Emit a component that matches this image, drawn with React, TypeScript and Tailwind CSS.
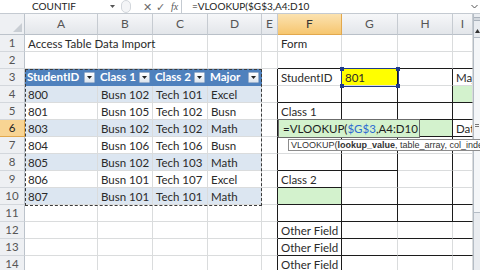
import React from 'react';

type Col = { k: string; w: string };

const cols: Col[] = [
  { k: 'A', w: 'w-[73px]' },
  { k: 'B', w: 'w-[55px]' },
  { k: 'C', w: 'w-[55px]' },
  { k: 'D', w: 'w-[54px]' },
  { k: 'E', w: 'w-[16px]' },
  { k: 'F', w: 'w-[64px]' },
  { k: 'G', w: 'w-[56px]' },
  { k: 'H', w: 'w-[55px]' },
  { k: 'I', w: 'w-[20px]' },
];

const tableHeader = ['StudentID', 'Class 1', 'Class 2', 'Major'];
const tableRows = [
  ['800', 'Busn 102', 'Tech 101', 'Excel'],
  ['801', 'Busn 105', 'Tech 102', 'Busn'],
  ['803', 'Busn 102', 'Tech 102', 'Math'],
  ['804', 'Busn 106', 'Tech 106', 'Busn'],
  ['805', 'Busn 102', 'Tech 103', 'Math'],
  ['806', 'Busn 101', 'Tech 107', 'Excel'],
  ['807', 'Busn 101', 'Tech 101', 'Math'],
];

const rows = [1, 2, 3, 4, 5, 6, 7, 8, 9, 10, 11, 12, 13, 14];

function content(r: number, c: number): string | null {
  if (r === 1 && c === 0) return 'Access Table Data Import';
  if (r === 1 && c === 5) return 'Form';
  if (r >= 4 && r <= 10 && c <= 3) return tableRows[r - 4][c];
  if (r === 3 && c === 5) return 'StudentID';
  if (r === 3 && c === 6) return '801';
  if (r === 3 && c === 8) return 'Major';
  if (r === 5 && c === 5) return 'Class 1';
  if (r === 6 && c === 8) return 'Date';
  if (r === 9 && c === 5) return 'Class 2';
  if (r >= 12 && c === 5) return 'Other Field';
  return null;
}

// form outline edges
function rightDark(r: number, c: number) {
  if (r < 3) return false;
  if (c === 4 || c === 5) return true;
  if ((c === 6 || c === 7) && r <= 11) return true;
  return false;
}

function bottomDark(r: number, c: number) {
  if (c < 5) return false;
  if (r === 2) return true;
  if ([4, 5, 6, 10, 11, 12, 13, 14].includes(r)) return true;
  if (r === 8 && c <= 6) return true;
  if (r === 9 && c === 5) return true;
  return false;
}

function fill(r: number, c: number) {
  if (r === 3 && c === 6) return 'bg-[#ffff00]';
  if (r === 6 && c >= 5 && c <= 7) return 'bg-[#d3f2cd]';
  if (r === 4 && c === 8) return 'bg-[#d3f2cd]';
  if (r === 10 && c === 5) return 'bg-[#d3f2cd]';
  if (r >= 4 && r <= 10 && c <= 3 && r % 2 === 0) return 'bg-[#dce6f1]';
  return '';
}

function DropBtn() {
  return (
    <div className="w-[11px] h-[11px] shrink-0 flex items-center justify-center border border-[#9db3cf] bg-gradient-to-b from-white to-[#dde5ee] rounded-[1px]">
      <svg width="5" height="3" viewBox="0 0 5 3">
        <path d="M0 0h5L2.5 3z" fill="#222" />
      </svg>
    </div>
  );
}

function Row({ r }: { r: number }) {
  const active = r === 6;
  return (
    <div className="flex h-[17px]">
      <div
        className={`w-[25px] shrink-0 h-full flex items-center justify-center text-[11.5px] border-r border-b ${
          active
            ? 'bg-[#f8d493] text-[#222] border-r-[#e2a84d] border-b-[#e2a84d]'
            : 'bg-[#eef0f3] text-[#555] border-r-[#bcc3cb] border-b-[#d3d7dc]'
        }`}
      >
        {r}
      </div>
      {cols.map((col, c) => {
        if (r === 3 && c <= 3) {
          return (
            <div
              key={col.k}
              className={`${col.w} shrink-0 h-full border-r border-b border-r-[#4f81bd] border-b-[#4f81bd] bg-[#4f81bd] flex items-center justify-between pl-[2px] pr-[2px]`}
            >
              <span className="text-white font-bold text-[11.5px] whitespace-nowrap">{tableHeader[c]}</span>
              <DropBtn />
            </div>
          );
        }
        const text = content(r, c);
        const rc = rightDark(r, c) ? 'border-r-[#1c1c1c]' : 'border-r-[#dadcdd]';
        const bc = bottomDark(r, c) ? 'border-b-[#1c1c1c]' : 'border-b-[#dadcdd]';
        return (
          <div
            key={col.k}
            className={`${col.w} shrink-0 h-full border-r border-b ${rc} ${bc} ${fill(r, c)} ${c === 8 ? 'overflow-hidden' : ''}`}
          >
            {text !== null && (
              <span className="relative z-[1] block pl-[3px] text-[11.5px] leading-[17px] whitespace-nowrap text-[#2a2a2a]">
                {text}
              </span>
            )}
          </div>
        );
      })}
    </div>
  );
}

function FormulaBar() {
  return (
    <div className="h-[14px] flex items-center bg-white border-b border-[#c4cad1] text-[10px] text-[#222]">
      <div className="w-[120px] shrink-0 flex items-center pl-[32px]">
        <span className="flex-1">COUNTIF</span>
        <svg width="5" height="3" viewBox="0 0 5 3" className="mr-[5px]">
          <path d="M0 0h5L2.5 3z" fill="#555" />
        </svg>
      </div>
      <div className="w-[62px] shrink-0 flex items-center h-full border-r border-[#c4cad1]">
        <div className="w-[10px] h-[13px] rounded-full border border-[#d3d7dc] bg-[#f4f5f7] ml-[1px]" />
        <span className="ml-[12px] text-[11px] text-[#6a6a6a] leading-none">✕</span>
        <span className="ml-[4px] text-[11px] text-[#6a6a6a] leading-none">✓</span>
        <span className="ml-[6px] text-[10px] italic font-['Liberation_Serif',serif] text-[#555]">fx</span>
      </div>
      <div className="flex-1 pl-[10px] whitespace-nowrap">=VLOOKUP($G$3,A4:D10</div>
      <svg width="7" height="5" viewBox="0 0 7 5" className="mr-[2px]">
        <path d="M0.5 1l3 3 3-3" stroke="#555" fill="none" />
      </svg>
    </div>
  );
}

function ColumnHeader() {
  return (
    <div className="flex h-[21px]">
      <div className="w-[25px] shrink-0 h-full bg-[#eef0f3] border-r border-b border-[#bcc3cb] flex items-end justify-end p-[2px]">
        <svg width="9" height="9" viewBox="0 0 9 9">
          <path d="M9 0v9H0z" fill="#c9ced4" />
        </svg>
      </div>
      {cols.map((col) => (
        <div
          key={col.k}
          className={`${col.w} shrink-0 h-full border-r border-b flex items-center justify-center text-[12px] ${
            col.k === 'F'
              ? 'bg-gradient-to-b from-[#fbe2b0] to-[#f6c66e] text-[#333] border-r-[#e2a84d] border-b-[#e2a84d]'
              : 'bg-gradient-to-b from-[#f6f7f9] to-[#e3e6ea] text-[#555] border-r-[#c6cbd1] border-b-[#b9c0c8]'
          }`}
        >
          {col.k}
        </div>
      ))}
    </div>
  );
}

function ScrollBar() {
  return (
    <div className="flex-1 bg-[#e9ecf0] border-l border-[#b4bcc5] flex flex-col items-center">
      <div className="w-full h-[4px] mt-[3px] bg-[#d3d8de] border-y border-[#aab2bc]" />
      <svg width="5" height="4" viewBox="0 0 5 4" className="mt-[8px]">
        <path d="M0 4h5L2.5 0z" fill="#333" />
      </svg>
      <div className="w-full mt-[4px] h-[176px] bg-[#f4f6f8] border-y border-[#b4bcc5] flex flex-col items-center justify-center gap-[1px]">
        <div className="w-[4px] h-[1px] bg-[#777]" />
        <div className="w-[4px] h-[1px] bg-[#777]" />
      </div>
    </div>
  );
}

export default function App() {
  return (
    <div className="relative w-[480px] h-[270px] overflow-hidden bg-white font-['Lato',sans-serif]">
      <FormulaBar />
      <div className="flex">
        <div className="w-[473px] shrink-0">
          <ColumnHeader />
          {rows.map((r) => (
            <Row key={r} r={r} />
          ))}
        </div>
        <ScrollBar />
      </div>

      {/* copy marquee around the table */}
      <div className="absolute left-[25px] top-[69px] w-[237px] h-[137px] border border-dashed border-[#3a3a3a] pointer-events-none z-[2]" />

      {/* range reference on G3 */}
      <div className="absolute left-[341px] top-[68px] w-[58px] h-[19px] border border-[#1e3a8a] z-[2]">
        <div className="absolute -left-[2px] -top-[2px] w-[4px] h-[4px] bg-[#1e3a8a]" />
        <div className="absolute -right-[2px] -top-[2px] w-[4px] h-[4px] bg-[#1e3a8a]" />
        <div className="absolute -left-[2px] -bottom-[2px] w-[4px] h-[4px] bg-[#1e3a8a]" />
        <div className="absolute -right-[2px] -bottom-[2px] w-[4px] h-[4px] bg-[#1e3a8a]" />
      </div>

      {/* in-cell editor */}
      <div className="absolute left-[278px] top-[119px] min-w-[136px] h-[19px] border border-[#6b6b6b] bg-[#d3f2cd] z-[3] pl-[4px] pr-[1px] text-[11.5px] leading-[17px] whitespace-nowrap text-[#1e1e1e]">
        =VLOOKUP(<span className="text-[#2e6bd1]">$G$3</span>,A4:D10
      </div>

      {/* function tooltip */}
      <div className="absolute left-[288px] top-[139px] h-[12px] border border-[#8c8c8c] bg-white z-[4] pl-[2px] pr-[3px] text-[9px] leading-[10px] whitespace-nowrap text-[#333] font-['Liberation_Sans',sans-serif]">
        VLOOKUP(<span className="font-bold">lookup_value</span>, table_array, col_index_num, [range_lookup])
      </div>
    </div>
  );
}
